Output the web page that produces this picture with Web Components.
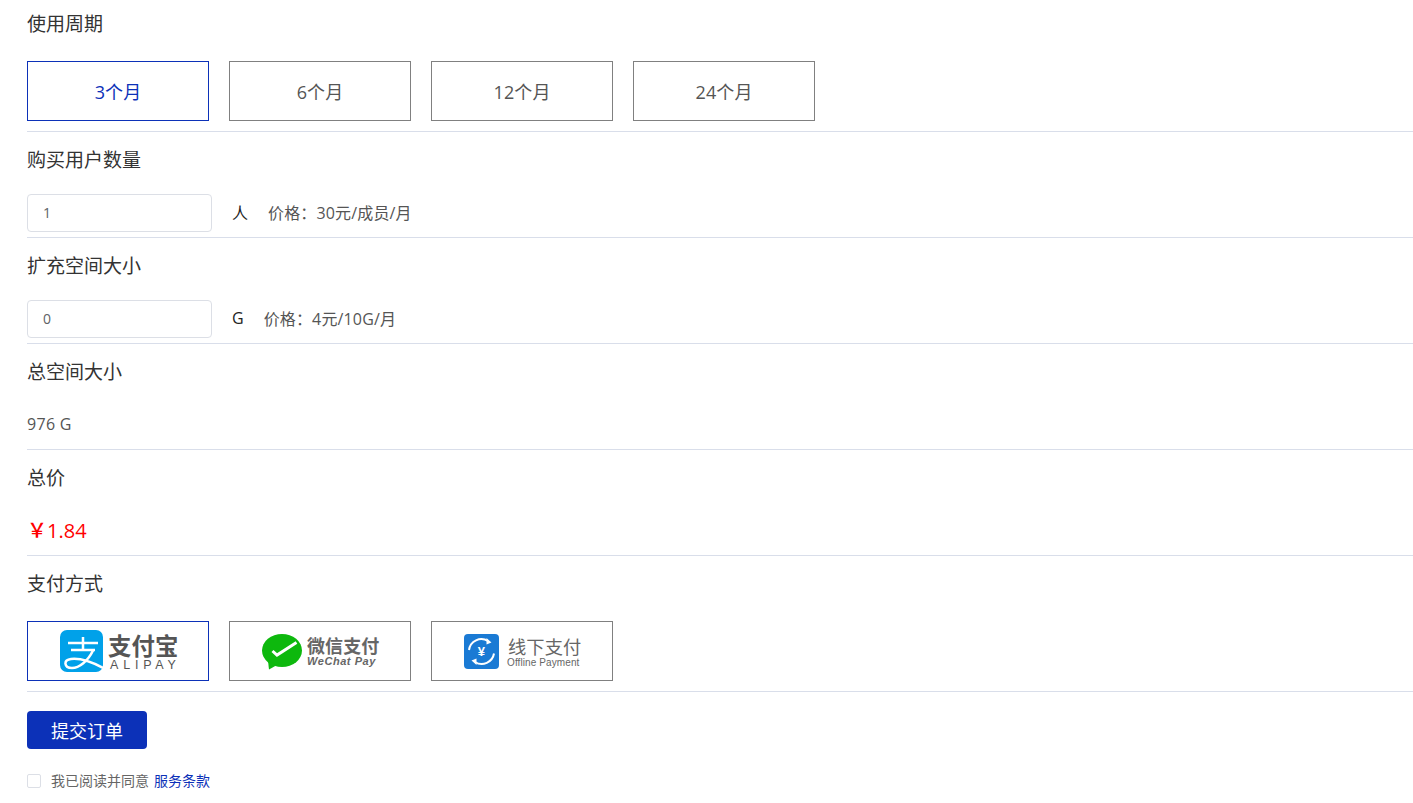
<!DOCTYPE html>
<html lang="zh-CN"><head><meta charset="utf-8"><title>订单</title>
<style>
html,body{margin:0;padding:0;background:#fff;overflow:hidden}
body{font-family:"Open Sans","Noto Sans CJK SC",sans-serif;color:#333}
</style></head><body>
<order-page>
  <order-field label="使用周期" tall first>
    <choice-row>
      <choice-box selected>3个月</choice-box>
      <choice-box>6个月</choice-box>
      <choice-box>12个月</choice-box>
      <choice-box>24个月</choice-box>
    </choice-row>
  </order-field>
  <order-field label="购买用户数量">
    <count-input value="1" unit="人" price="价格：30元/成员/月"></count-input>
  </order-field>
  <order-field label="扩充空间大小">
    <count-input value="0" unit="G" price="价格：4元/10G/月"></count-input>
  </order-field>
  <order-field label="总空间大小"><plain-value>976 G</plain-value></order-field>
  <order-field label="总价"><plain-value kind="price"><span style="font-weight:500">￥</span>1.84</plain-value></order-field>
  <order-field label="支付方式" tall>
    <choice-row>
      <choice-box selected><alipay-logo></alipay-logo></choice-box>
      <choice-box><wechat-logo></wechat-logo></choice-box>
      <choice-box><offline-logo></offline-logo></choice-box>
    </choice-row>
  </order-field>
  <submit-bar></submit-bar>
</order-page>

<script>
function def(name, css, html, init){
  customElements.define(name, class extends HTMLElement{
    connectedCallback(){
      if(this.shadowRoot) return;
      const r=this.attachShadow({mode:'open'});
      r.innerHTML='<style>'+css+'</style>'+(typeof html==='function'?html(this):html);
      if(init) init(this,r);
    }
  });
}
const esc=s=>String(s||'');
def('order-page',':host{display:block;padding-left:27px}','<slot></slot>');
def('order-field',`
  :host{display:block;padding:14px 0 5px;border-bottom:1px solid #d9deea;}
  :host([first]){padding-top:10px}
  :host([tall]){padding-bottom:10px}
  .l{font-size:19px;line-height:28px;color:#333;margin-bottom:20px;white-space:nowrap}
  :host([tall]) .l{margin-bottom:23px}
  .c{display:flex;align-items:center;height:38px}
  :host([tall]) .c{height:60px}
`,h=>`<div class="l">${esc(h.getAttribute('label'))}</div><div class="c"><slot></slot></div>`);
def('choice-row',':host{display:flex;gap:20px}','<slot></slot>');
def('choice-box',`
  :host{display:flex;box-sizing:border-box;width:182px;height:60px;align-items:center;justify-content:center;
    border:1px solid #808080;color:#555;font-size:18px;background:#fff;letter-spacing:.1px}
  :host([selected]){border-color:#0c31b8;color:#0c31b8}
`,'<slot></slot>');
def('count-input',`
  :host{display:flex;align-items:center;height:38px;font-size:16px}
  .box{box-sizing:border-box;width:185px;height:38px;border:1px solid #dcdfe6;border-radius:4px;
    padding:0 0 2px 15px;display:flex;align-items:center;font-size:14px;color:#606266}
  .u{margin-left:20px;color:#222;white-space:nowrap;padding-bottom:3px}
  .p{margin-left:20px;color:#555;white-space:nowrap;padding-bottom:3px;letter-spacing:.15px}
`,h=>`<div class="box">${esc(h.getAttribute('value'))}</div><span class="u">${esc(h.getAttribute('unit'))}</span><span class="p">${esc(h.getAttribute('price'))}</span>`);
def('plain-value',`
  :host{display:block;font-size:16px;color:#555;line-height:36px;padding-bottom:2px;white-space:nowrap;letter-spacing:.3px}
  :host([kind=price]){font-size:20px;color:#f00;letter-spacing:0;line-height:38px;padding-bottom:0}
`,'<slot></slot>');
def('alipay-logo',`
  :host{display:flex;align-items:center;gap:5px;width:118px;height:42px;color:#555;margin-left:2px}
  svg{display:block;flex:none}
  .t{display:flex;flex-direction:column;align-items:flex-start}
  .a{font:700 23.400px/26px "Noto Sans CJK SC",sans-serif;white-space:nowrap;color:#555}
  .b{font:400 12.500px/12px "Liberation Sans",sans-serif;letter-spacing:4.800px;color:#555;padding:1px 0 0 2px;white-space:nowrap}
`,`<svg width="43" height="42" viewBox="0 0 43 42"><rect width="43" height="42" rx="7" fill="#00a1e9"/>
<g fill="none" stroke="#fff" stroke-width="2.500" stroke-linecap="butt"><path d="M8 13H38M23 7V20M11 20H35"/><path d="M33 20.500C28 31 19 38 12 38C4 38 3 30 11 29C20 28 32 32 43 38"/></g></svg>
<div class="t"><div class="a">支付宝</div><div class="b">ALIPAY</div></div>`);
def('wechat-logo',`
  :host{display:flex;align-items:center;gap:5px;width:118px;height:42px;margin-left:2px}
  svg{display:block;flex:none;margin-top:1px}
  .t{display:flex;flex-direction:column;align-items:flex-start;margin-top:-1px}
  .a{font:700 18px/22px "Noto Sans CJK SC",sans-serif;color:#666;white-space:nowrap}
  .b{font:italic 700 11px/11px "Liberation Sans",sans-serif;color:#666;letter-spacing:.55px;white-space:nowrap}
`,`<svg width="40" height="36" viewBox="0 0 40 36"><ellipse cx="20" cy="16.500" rx="20" ry="16.500" fill="#0db80d"/><path d="M6 27L7 35.500L15 31Z" fill="#0db80d"/>
<path d="M10.500 17L15 21L34.500 8.500" fill="none" stroke="#fff" stroke-width="3"/></svg>
<div class="t"><div class="a">微信支付</div><div class="b">WeChat Pay</div></div>`);
def('offline-logo',`
  :host{display:flex;align-items:center;gap:9px;width:118px;height:42px;margin-left:2px}
  svg{display:block;flex:none;margin-top:1px}
  .t{display:flex;flex-direction:column;align-items:flex-start}
  .a{font:400 18.250px/22px "Noto Sans CJK SC",sans-serif;color:#666;white-space:nowrap}
  .b{font:400 10px/11px "Liberation Sans",sans-serif;color:#666;white-space:nowrap;margin-left:-1px}
  text{font:700 13px "Liberation Sans",sans-serif;fill:#fff}
`,`<svg width="35" height="35" viewBox="0 0 35 35"><rect width="35" height="35" rx="4" fill="#1a7ad4"/>
<g fill="none" stroke="#fff" stroke-width="2"><path d="M5 16A12.500 12.500 0 0 1 24 7"/><path d="M30 19.500A12.500 12.500 0 0 1 11 28"/></g>
<path d="M22.500 4L27.500 8.500L22.500 10.500Z M12.500 31L7.500 26.500L12.500 24.500Z" fill="#fff"/>
<text x="17.500" y="22" text-anchor="middle">¥</text></svg>
<div class="t"><div class="a">线下支付</div><div class="b">Offline Payment</div></div>`);
def('submit-bar',`
  :host{display:block;padding-top:19px}
  .btn{box-sizing:border-box;width:120px;height:38px;background:#0c31b8;color:#fff;border-radius:4px;font-size:18px;
    display:flex;align-items:center;justify-content:center}
  .agree{display:flex;align-items:center;height:16px;margin-top:24px;font-size:14px;color:#666;white-space:nowrap}
  .cb{box-sizing:border-box;width:14px;height:14px;border:1px solid #dcdfe6;border-radius:2px;margin-right:10px}
  .t{padding-bottom:2px}
  .link{color:#0c31b8;margin-left:5px;padding-bottom:2px}
`,`<div class="btn">提交订单</div><div class="agree"><span class="cb"></span><span class="t">我已阅读并同意</span><span class="link">服务条款</span></div>`);
</script>
</body></html>
